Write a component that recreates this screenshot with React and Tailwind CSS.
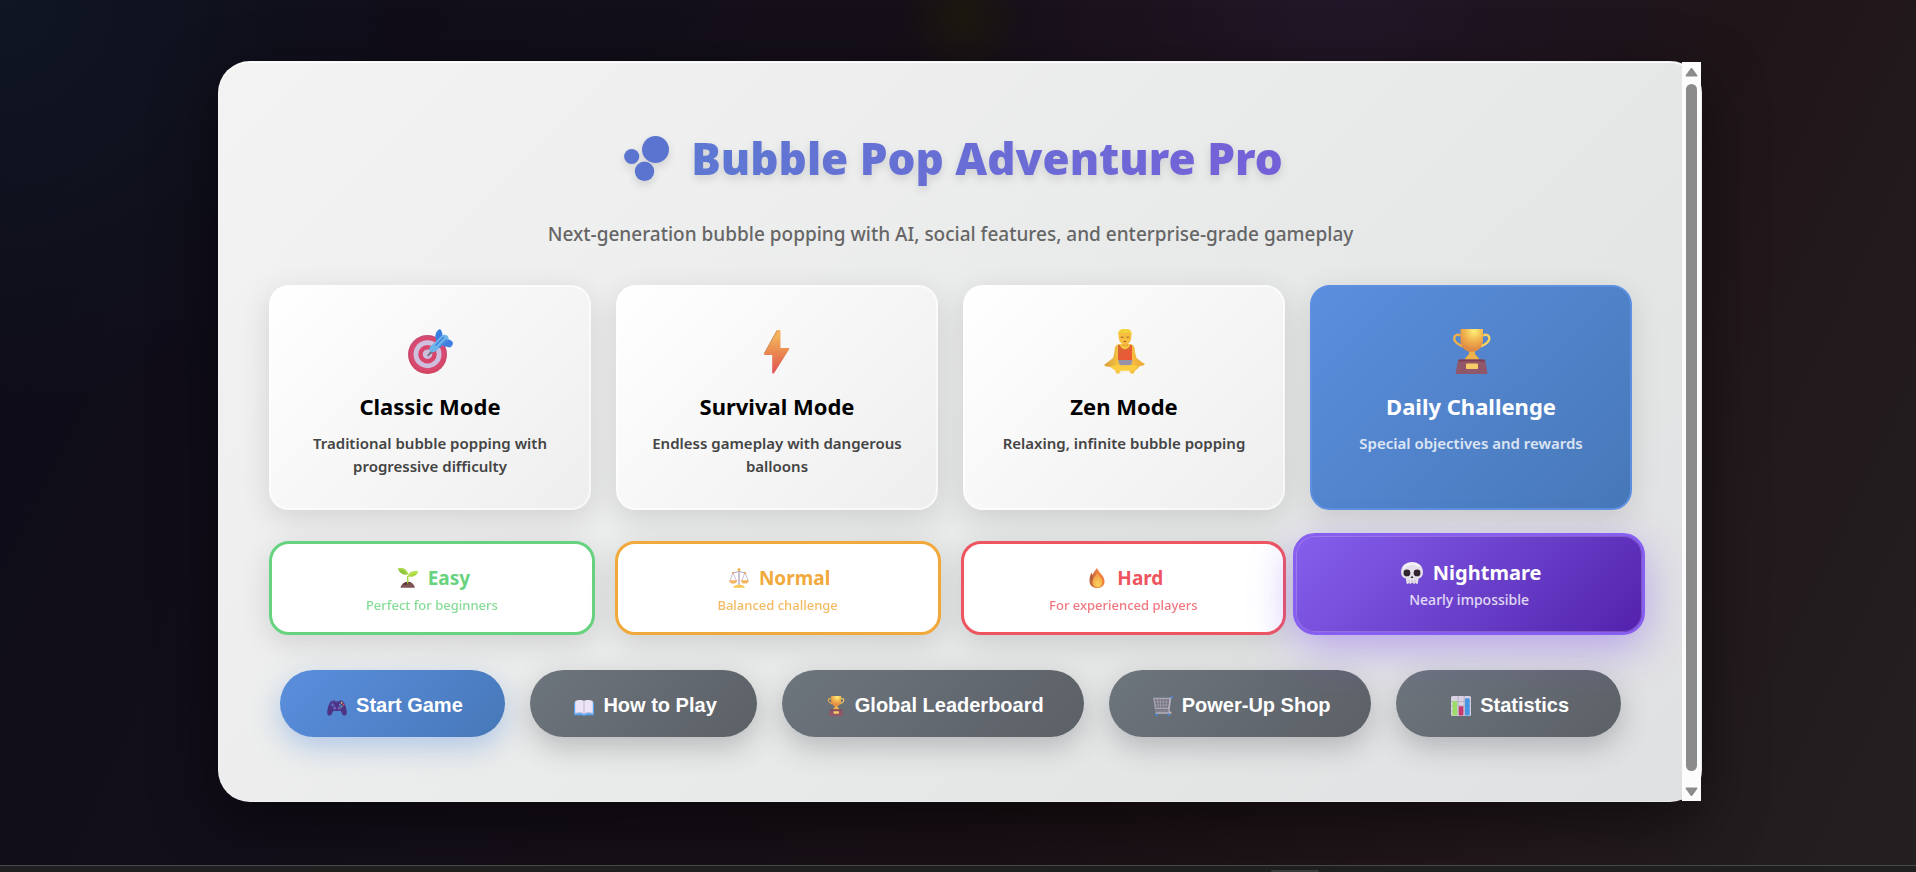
import React from "react";

const UI = "font-['Noto_Sans',sans-serif]";

function TargetIcon({ className }) {
  return (
    <svg viewBox="0 0 45 45" className={className} aria-hidden="true">
      <defs>
        <linearGradient id="targetRim" x1="0" y1="0" x2="0" y2="1">
          <stop offset="0" stopColor="#c4507c" />
          <stop offset="1" stopColor="#d3445f" />
        </linearGradient>
      </defs>
      <circle cx="19.500" cy="25.500" r="19.500" fill="url(#targetRim)" />
      <circle cx="19.500" cy="25" r="17.500" fill="#d9486f" />
      <circle cx="19.500" cy="25.200" r="14" fill="#cdbfdd" />
      <circle cx="19.500" cy="25.200" r="9.200" fill="#d9446c" />
      <circle cx="19.500" cy="25.200" r="4.800" fill="#cbbfdc" />
      <path d="M19 26.500l4-5 2 2-5 4z" fill="#77707f" />
      <path d="M28 11c-1.500-5 0-9 4-11 2 2 2.500 4 2.500 7l-6 6z" fill="#3a7ee0" />
      <path d="M35 17l7 1.500c2-1 3-3 3-5-3-4-6-4-9-2z" fill="#3f7fe0" />
      <path d="M22.500 17.500L34 6.500c3-2 7.500.5 6.500 4L28.500 21.500c-2 2.500-5 2-6.500.5s-1-3 .5-4.500z" fill="#6fb4e8" />
      <path d="M27.500 16.500L36 8M31 18.500l8-8" stroke="#3f86e2" strokeWidth="1.600" fill="none" />
    </svg>
  );
}

function BoltIcon({ className }) {
  return (
    <svg viewBox="0 0 45 45" className={className} aria-hidden="true">
      <defs>
        <linearGradient id="bolt" x1="0" y1="0" x2="0" y2="1">
          <stop offset="0.150" stopColor="#f2b25c" />
          <stop offset="0.550" stopColor="#ea8450" />
          <stop offset="1" stopColor="#e05055" />
        </linearGradient>
      </defs>
      <path d="M22.500 1h2q1 0 1 1V19h8q1.500 0 .7 1.300L19.500 43.500q-.5 1-1.200 1-1.100 0-1.100-1V26h-7.200q-1.500 0-.8-1.500L21.500 1.800z" fill="url(#bolt)" />
      <path d="M22 1.500L9.200 24.500" stroke="#b98350" strokeWidth="0.700" />
    </svg>
  );
}

function ZenIcon({ className }) {
  return (
    <svg viewBox="0 0 45 45" className={className} aria-hidden="true">
      <defs>
        <linearGradient id="zenSkin" x1="0" y1="0" x2="1" y2="0">
          <stop offset="0" stopColor="#d9a038" />
          <stop offset="0.450" stopColor="#fbcf45" />
          <stop offset="1" stopColor="#eda637" />
        </linearGradient>
        <linearGradient id="zenShirt" x1="0" y1="0" x2="1" y2="1">
          <stop offset="0" stopColor="#d96737" />
          <stop offset="1" stopColor="#f05534" />
        </linearGradient>
      </defs>
      <path d="M17 15c-4 1-4.500 4-4.500 8l-1.500 6-7 5.500c-2 .5-2 2.800.5 3L9 38l3 2.500c1.500 1 2 2.500 2 4h3.500l1.500-2h8l1.500 2H32c0-2 1-3 2.500-4l3.500-3.500 3-.5c2.500-.5 2-2 0-2.500L34.500 29 33 23c0-4-.5-7-4.500-8z" fill="url(#zenSkin)" />
      <path d="M16 16h2c1 5.500 9 5.500 10 0h2v15H16z" fill="url(#zenShirt)" />
      <path d="M16 31h14.500l-1.500 5.500H18z" fill="#9693a6" />
      <path d="M8.500 38c4-2.500 10-2 14.500-1.500 4-.5 9-1 13.500 1L31 42H14z" fill="#fccd42" />
      <path d="M19 41.800h8l2 2h-12z" fill="#f6f2e8" />
      <rect x="20" y="12.500" width="6" height="5" fill="#e9ad3a" />
      <path d="M16.500 5.500C17 1 20-.3 23 0c4-.3 6.500 2 6.500 5.500 0 6-1.500 10-6.500 10s-6.500-4.500-6.500-10z" fill="#f6bf40" />
      <path d="M16 5.500C15.500 2 19-.5 23 0c3.500-.5 7 1 6.800 5.500-1.500-.5-2-1.500-3-2.500-3 1.500-7 1-9 .5z" fill="#f1d33c" />
      <path d="M18.800 8.200h2.700M24.500 8.200h2.700M21.600 12.500h2.600" stroke="#a4592c" strokeWidth="1" />
    </svg>
  );
}

function TrophyIcon({ className, id }) {
  return (
    <svg viewBox="0 0 45 45" className={className} aria-hidden="true">
      <defs>
        <radialGradient id={id + "-cup"} cx="0.600" cy="0.100" r="0.800">
          <stop offset="0" stopColor="#fff078" />
          <stop offset="0.550" stopColor="#f0b14e" />
          <stop offset="1" stopColor="#df8b45" />
        </radialGradient>
      </defs>
      <path d="M11.500 6.500C7.500 4.500 5 6.500 5.200 10 5.500 14 10 15.500 14 17.500" stroke="#eeb04d" strokeWidth="2.500" fill="none" />
      <path d="M34 6.500c4-2 6.500 0 6.300 3.500-.3 4-4.800 5.500-8.800 7.500" stroke="#f7d061" strokeWidth="2.500" fill="none" />
      <path d="M20 21h6v4l4 4.500v2H16v-2l4-4.500z" fill="#eeb24c" />
      <path d="M11.500 0h22.500v11c0 7-5 12-11.300 12S11.500 18 11.500 11z" fill={"url(#" + id + "-cup)"} />
      <path d="M10.500 30.500h24.500q1 0 1.300 1.200L38.500 45h-32l2.500-13.300q.2-1.200 1.500-1.200z" fill="#90566a" />
      <path d="M10.500 30.500h24.500l1.300 2H9.200z" fill="#7c4052" />
      <rect x="17" y="34.500" width="12" height="5.500" rx="0.700" fill="#f7cb66" />
    </svg>
  );
}

function SproutIcon({ className }) {
  return (
    <svg viewBox="0 0 20 20" className={className} aria-hidden="true">
      <path d="M2.500 19.700C3 16.500 6 13.800 9.800 13.800s6.600 2.700 7 5.900z" fill="#805453" />
      <path d="M5 16.500c2-2.500 5.500-3 8-2-1 1.500-5 2.500-8 2z" fill="#5b3338" />
      <path d="M9.700 15.500V8" stroke="#a6d63e" strokeWidth="1.500" />
      <path d="M0 .5C5-1 9.500 1.500 9.800 6.500 5 7.500 1 5 0 .5z" fill="#8dc73c" />
      <path d="M1 1c4-.5 7.500 2 8.800 5" stroke="#b9e14e" strokeWidth="1.200" fill="none" />
      <path d="M20 3.200C19.500 7.500 15 9.500 9.700 8.500 10 4.500 15 2.300 20 3.200z" fill="#a7da41" />
      <path d="M19 4c-3 .5-7 1.500-9 4.200" stroke="#cdec64" strokeWidth="1" fill="none" />
    </svg>
  );
}

function ScalesIcon({ className }) {
  return (
    <svg viewBox="0 0 20 20" className={className} aria-hidden="true">
      <path d="M10 2.500V17" stroke="#a596b5" strokeWidth="1.200" />
      <path d="M3 5.200c3-.8 5-1 7-2 2 1 4 1.200 7 2" stroke="#b0a0bd" strokeWidth="1" fill="none" />
      <path d="M3.800 5L1 12.500M4.200 5L7.300 12.500M15.800 5l-3.100 7.500M16.200 5L19 12.500" stroke="#c0adc4" strokeWidth="0.800" />
      <path d="M0 12.200h8.300c-.3 2-1.800 3.400-4.100 3.400S.3 14.200 0 12.200zM11.700 12.200H20c-.3 2-1.800 3.400-4.100 3.400s-3.900-1.400-4.200-3.400z" fill="#f5b35f" />
      <path d="M4 19.700c.5-2 3-3 6-3s5.500 1 6 3z" fill="#f8c84f" />
      <circle cx="10" cy="1.600" r="1.500" fill="#f5b64e" />
      <circle cx="4" cy="5" r="1" fill="#eaa455" />
      <circle cx="16" cy="5" r="1" fill="#eaa455" />
    </svg>
  );
}

function FlameIcon({ className }) {
  return (
    <svg viewBox="0 0 20 20" className={className} aria-hidden="true">
      <defs>
        <linearGradient id="flameOuter" x1="0" y1="0" x2="1" y2="0">
          <stop offset="0" stopColor="#b8603f" />
          <stop offset="0.600" stopColor="#ee8440" />
          <stop offset="1" stopColor="#ee7a3b" />
        </linearGradient>
        <radialGradient id="flameInner" cx="0.550" cy="0.800" r="0.700">
          <stop offset="0" stopColor="#fbd560" />
          <stop offset="1" stopColor="#f39a42" />
        </radialGradient>
      </defs>
      <path d="M10 0c1 2.500 2.500 4 4.500 6.500 2 2.500 3 4.500 3 7 0 4-3 6.500-7.300 6.500S2.500 17.500 2.500 13c0-3 .5-6 2-8.500.5 1 .5 1.500 1 2.500C6.200 4.500 8.500 2.500 10 0z" fill="url(#flameOuter)" />
      <path d="M10 4.500c.5 3 5.500 5 5.500 9.700 0 3-2 5-5 5s-5-1.800-5-5c0-4 3-5 4.500-9.700z" fill="url(#flameInner)" />
      <path d="M5.300 7.500c-.5 1.500-1 2.500-1.200 4.500" stroke="#8f4a3a" strokeWidth="0.700" fill="none" />
    </svg>
  );
}

function SkullIcon({ className }) {
  return (
    <svg viewBox="0 0 20 20" className={className} aria-hidden="true">
      <path d="M10 0c6 0 10 3.800 10 9.300 0 3-1.200 5-4 5.700l-.6 4c-.2 1.300-1.600 1.300-1.800 0h-.6c-.2 1.300-1.700 1.300-1.900 0h-1.600c-.2 1.300-1.700 1.300-1.900 0H7c-.2 1.300-1.800 1.300-2 0L4.400 15C1.400 14.300 0 12.300 0 9.300 0 3.800 4 0 10 0z" fill="#e5dfe9" />
      <path d="M3 5C5 1.500 12 0 16 3.500" stroke="#f6f2f7" strokeWidth="2" fill="none" strokeLinecap="round" />
      <circle cx="5.400" cy="9.900" r="3.100" fill="#30252f" />
      <circle cx="14.600" cy="9.900" r="3.100" fill="#30252f" />
      <path d="M10 12.500l1.300 2H8.700z" fill="#30252f" />
      <path d="M7.500 16.500V19M10 16.500V19M12.700 16.500V19" stroke="#b9adc4" strokeWidth="0.600" />
    </svg>
  );
}

function GamepadIcon({ className }) {
  return (
    <svg viewBox="0 0 20 20" className={className} aria-hidden="true">
      <path d="M4.500 5c2-1.300 3.200-.2 4.200.2h2.600c1-.4 2.200-1.500 4.200-.2 2.500 1.500 4.300 8 4.300 12 0 3-3.300 3.500-4.600 1L13.800 15H6.200L4.800 18C3.500 20.500.200 20 .200 17 .200 13 2 6.500 4.500 5z" fill="#4c3485" />
      <path d="M4.800 5.500c2-1 3 .2 4 .5h2.400c1-.3 2-1.500 4-.5" stroke="#6650a0" strokeWidth="0.800" fill="none" />
      <path d="M5.500 6.800v4M3.500 8.800h4" stroke="#5f66bd" strokeWidth="1.300" />
      <circle cx="7.700" cy="12" r="1.700" fill="#6f5ab5" />
      <circle cx="12.400" cy="12" r="1.700" fill="#6f5ab5" />
      <circle cx="14.700" cy="6.800" r="0.900" fill="#f0c34d" />
      <circle cx="16.600" cy="8.700" r="0.900" fill="#e2566c" />
      <circle cx="12.900" cy="8.700" r="0.900" fill="#4f9ee8" />
      <circle cx="14.700" cy="10.500" r="0.900" fill="#58c77b" />
    </svg>
  );
}

function BookIcon({ className }) {
  return (
    <svg viewBox="0 0 20 20" className={className} aria-hidden="true">
      <path d="M0 6.500h20v12q0 .8-1 .8h-7.500c0 1-3 1-3 0H1q-1 0-1-.8z" fill="#57a5ec" />
      <path d="M1.200 5C4 3.500 8 3.600 10 5c2-1.400 6-1.500 8.800 0v12.300c-3-1-6.800-1-8.800.6-2-1.600-5.800-1.600-8.800-.6z" fill="#ebe5f5" />
      <path d="M10 5v12.800" stroke="#bfb3d4" strokeWidth="0.900" />
      <path d="M1.500 17.400c3-1 6.500-.8 8.500.6 2-1.400 5.500-1.600 8.500-.6" stroke="#c8bcdd" strokeWidth="0.800" fill="none" />
    </svg>
  );
}

function CartIcon({ className }) {
  return (
    <svg viewBox="0 0 20 20" className={className} aria-hidden="true">
      <path d="M1 2.500h16l-1.200 10H2.500z" fill="#74727f" stroke="#aaa5b3" strokeWidth="1.300" />
      <path d="M1.500 6h14.500M2 9h13.500M4.500 3l.8 9.500M7.300 3l.3 9.500M10.300 3v9.500M13.500 3l-.7 9.500" stroke="#a5a1ae" strokeWidth="0.800" />
      <path d="M19.500 1.200l-2 .8-1.700 12.500c0 1.500 1.700 1 2 2.500H2.500" stroke="#b9b3c0" strokeWidth="1.400" fill="none" />
      <path d="M2 15h14" stroke="#9a96a4" strokeWidth="1" />
      <path d="M17.500 1.800l2.300-.8" stroke="#4788dd" strokeWidth="1.600" />
      <circle cx="3.500" cy="18.700" r="1.200" fill="#4788dd" />
      <circle cx="15.500" cy="18.700" r="1.200" fill="#4788dd" />
    </svg>
  );
}

function ChartIcon({ className }) {
  return (
    <svg viewBox="0 0 20 20" className={className} aria-hidden="true">
      <rect x="0" y="0" width="20" height="20" rx="1.500" fill="#d9d2e2" />
      <path d="M0 5.500h20M0 10h20M0 15h20M7.200 0v20M13.200 0v20" stroke="#aea5ba" strokeWidth="0.700" />
      <rect x="1.500" y="5" width="4.700" height="14.500" rx="0.700" fill="#9bdc6a" />
      <rect x="7.800" y="10.300" width="4.600" height="9.200" rx="0.700" fill="#c8386c" />
      <rect x="14" y="2.200" width="4.700" height="17.300" rx="0.700" fill="#4796e4" />
    </svg>
  );
}

function BubblesIcon({ className }) {
  return (
    <svg viewBox="0 0 45 45" className={className} aria-hidden="true" fill="#5a74d0">
      <circle cx="31.500" cy="13.500" r="13.500" />
      <circle cx="7.700" cy="20.500" r="7.600" />
      <circle cx="20.500" cy="35.300" r="9.700" />
    </svg>
  );
}

const modes = [
  { title: "Classic Mode", text: "Traditional bubble popping with progressive difficulty", icon: <TargetIcon className="size-[45px]" /> },
  { title: "Survival Mode", text: "Endless gameplay with dangerous balloons", icon: <BoltIcon className="size-[45px]" /> },
  { title: "Zen Mode", text: "Relaxing, infinite bubble popping", icon: <ZenIcon className="size-[45px]" /> },
  { title: "Daily Challenge", text: "Special objectives and rewards", icon: <TrophyIcon id="daily" className="size-[45px]" />, featured: true },
];

const levels = [
  { title: "Easy", text: "Perfect for beginners", tone: "border-[#68d37e] text-[#68d37e]", icon: <SproutIcon className="ml-1 size-5" /> },
  { title: "Normal", text: "Balanced challenge", tone: "border-[#f2a93b] text-[#f2a93b]", icon: <ScalesIcon className="ml-1 size-5" /> },
  { title: "Hard", text: "For experienced players", tone: "border-[#ee5560] text-[#ee5560]", icon: <FlameIcon className="ml-1 size-5" /> },
  { title: "Nightmare", text: "Nearly impossible", selected: true, icon: <SkullIcon className="ml-1 size-[22px]" /> },
];

const actions = [
  { label: "Start Game", icon: <GamepadIcon className="mt-0.5 ml-1 size-5" />, primary: true },
  { label: "How to Play", icon: <BookIcon className="mt-0.5 ml-1 size-5" /> },
  { label: "Global Leaderboard", icon: <TrophyIcon id="leaders" className="mt-0.5 ml-1 size-5" /> },
  { label: "Power-Up Shop", icon: <CartIcon className="mt-0.5 ml-1 size-5" /> },
  { label: "Statistics", icon: <ChartIcon className="mt-0.5 ml-1 size-5" /> },
];

function ModeCard({ mode }) {
  const look = mode.featured
    ? "border-[#5c8fe0] bg-linear-135 from-[#5b8fde] to-[#4678b8] text-white"
    : "border-white/60 bg-linear-135 from-white to-[#eeeeee] text-black";
  return (
    <button type="button" className={"flex flex-col items-center rounded-[20px] border-2 bg-origin-border px-7 pt-[42px] pb-[30px] shadow-[0_8px_30px_rgba(0,0,0,0.12)] " + look}>
      {mode.icon}
      <span className="mt-4 text-[22px] leading-8 font-bold">{mode.title}</span>
      <span className={"mt-[10px] text-[15px] leading-[23px] font-semibold " + (mode.featured ? "text-white/80" : "text-[#444444]")}>{mode.text}</span>
    </button>
  );
}

function LevelCard({ level }) {
  if (level.selected) {
    return (
      <button type="button" aria-pressed="true" className="relative z-10 -mx-[13px] -mt-2 flex flex-col items-center rounded-[22px] border-3 border-[#875ff0] bg-linear-135 from-[#8660ee] to-[#5320ac] bg-origin-border px-5 pt-[22px] pb-5 text-white shadow-[0_14px_44px_rgba(124,77,240,0.42),inset_0_0_0_1px_rgba(255,255,255,0.2)]">
        <span className="flex items-center gap-[10px] text-[20px] leading-[30px] font-bold">{level.icon}{level.title}</span>
        <span className="mt-px text-[14px] leading-[22px] font-medium text-white/80">{level.text}</span>
      </button>
    );
  }
  return (
    <button type="button" aria-pressed="false" className={"flex flex-col items-center rounded-[20px] border-3 bg-white px-5 pt-5 pb-[17px] shadow-[0_8px_30px_rgba(0,0,0,0.12)] " + level.tone}>
      <span className="flex items-center gap-[10px] text-[19px] leading-7 font-bold">{level.icon}{level.title}</span>
      <span className="mt-[3px] text-[13px] leading-5 font-medium opacity-80">{level.text}</span>
    </button>
  );
}

function ActionButton({ action }) {
  const look = action.primary
    ? "from-[#5b8fde] to-[#4678b8] shadow-[0_10px_28px_rgba(91,143,222,0.4)]"
    : "from-[#6d757d] to-[#5c6067] shadow-[0_10px_28px_rgba(70,70,80,0.3)]";
  return (
    <button type="button" className={"flex h-[67px] min-w-[225px] items-center justify-center gap-[9px] rounded-full bg-linear-135 px-10 pt-[3px] font-['Liberation_Sans',Arial,sans-serif] text-[20px] leading-6 font-bold text-white " + look}>
      {action.icon}
      {action.label}
    </button>
  );
}

function ScrollRail() {
  return (
    <div aria-hidden="true" className="flex w-[19px] shrink-0 flex-col items-center bg-[#fcfcfc] pt-[6px] pb-[5px]">
      <svg viewBox="0 0 14 10" className="h-[9px] w-[13px]" fill="#8b8b8b">
        <path d="M7 0q.8 0 1.300.8L13.400 8q.8 1.500-.8 1.500H1.400Q-.2 9.500.600 8L5.700.8Q6.200 0 7 0z" />
      </svg>
      <div className="mt-[7px] mb-4 w-[11px] grow rounded-full bg-[#8b8b8b]" />
      <svg viewBox="0 0 14 10" className="h-[9px] w-[13px] rotate-180" fill="#8b8b8b">
        <path d="M7 0q.8 0 1.300.8L13.400 8q.8 1.500-.8 1.500H1.400Q-.2 9.500.600 8L5.700.8Q6.200 0 7 0z" />
      </svg>
    </div>
  );
}

export default function App() {
  return (
    <div className={"flex min-h-screen flex-col bg-[#15111a] bg-[radial-gradient(circle_60px_at_50.300%_2%,#1d190f,transparent),radial-gradient(circle_400px_at_0%_0%,#101623,transparent),radial-gradient(circle_400px_at_70%_0,#211627,transparent),linear-gradient(115deg,#0d0c18_0%,#120e1a_25%,#191015_60%,#21171a_80%,#242021_100%)] " + UI}>
      <main className="flex grow items-center justify-center pt-[61px] pr-4 pb-[63px] pl-5">
        <div className="flex w-full max-w-[1484px] rounded-[32px] border border-white/30 bg-linear-135 from-[#f3f3f3] via-[#e7e9e8] via-60% to-[#dfe0e2] bg-origin-border shadow-[0_20px_60px_rgba(0,0,0,0.5),inset_0_1px_0_#ffffff]">
          <div className="flex min-w-0 grow flex-col px-[50px] pt-[50px] pb-16">
            <h1 className="flex items-center justify-center gap-[22px] pl-[6px] drop-shadow-[0_4px_4px_rgba(0,0,0,0.12)]">
              <BubblesIcon className="size-[45px]" />
              <span className="bg-linear-90 from-[#5d78d2] to-[#7460d8] bg-clip-text text-[44px] leading-[92px] font-black text-transparent">
                Bubble Pop Adventure Pro
              </span>
            </h1>
            <p className="mt-[14px] text-center text-[19px] leading-8 font-medium text-[#666666]">
              Next-generation bubble popping with AI, social features, and enterprise-grade gameplay
            </p>
            <div className="mt-[35px] grid grid-cols-4 gap-[25px]">
              {modes.map((mode) => <ModeCard key={mode.title} mode={mode} />)}
            </div>
            <div className="mt-[31px] grid grid-cols-4 gap-5">
              {levels.map((level) => <LevelCard key={level.title} level={level} />)}
            </div>
            <div className="mt-[35px] flex flex-wrap justify-center gap-[25px]">
              {actions.map((action) => <ActionButton key={action.label} action={action} />)}
            </div>
          </div>
          <ScrollRail />
        </div>
      </main>
      <footer className="flex h-[7px] items-end justify-center overflow-hidden border-t border-[#484848] bg-[#1f1f1f]">
        <div className="ml-[674px] h-[2px] w-12 rounded-t-md bg-[#3a3a3a]" />
      </footer>
    </div>
  );
}
